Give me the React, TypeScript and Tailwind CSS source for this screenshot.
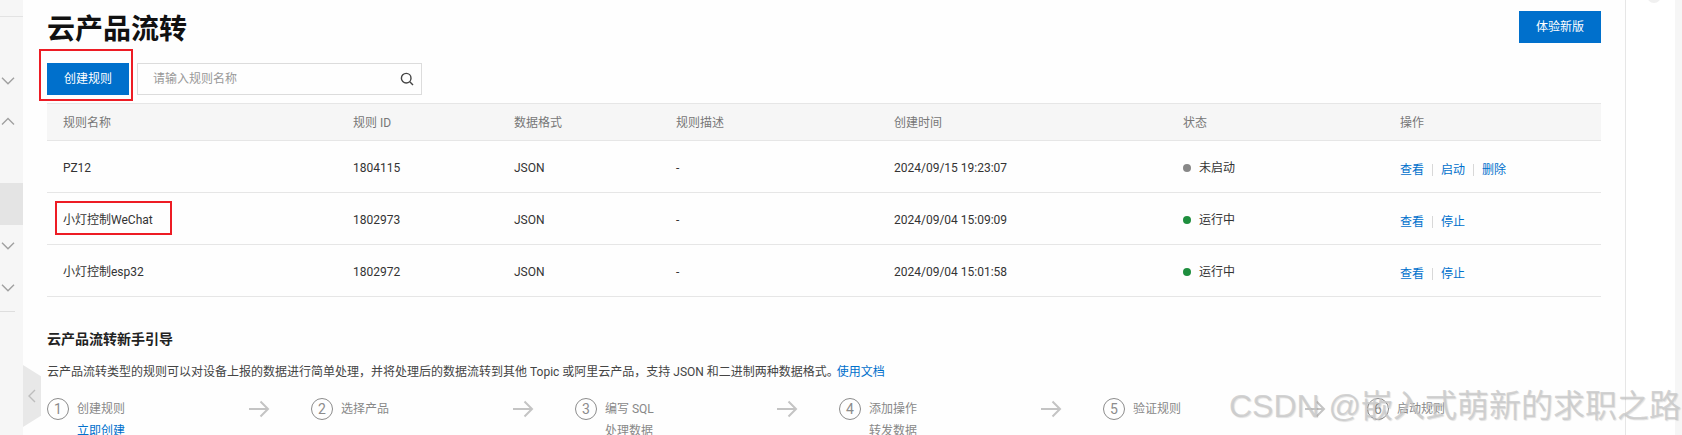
import React from "react";

const font = "font-['Roboto','Noto_Sans_CJK_SC',sans-serif]";

function Chevron({ up }: { up?: boolean }) {
  return (
    <svg width="14" height="8" viewBox="0 0 14 8" fill="none" stroke="#a0a0a0" strokeWidth="1.4">
      <path d={up ? "M1 7.5 L7 1.5 L13 7.5" : "M1 0.8 L7 6.8 L13 0.8"} />
    </svg>
  );
}

function SideRow({ up, h }: { up?: boolean; h: string }) {
  return (
    <div className={`flex items-center pl-px ${h}`}>
      <Chevron up={up} />
    </div>
  );
}

function Sidebar() {
  return (
    <div className="w-[23px] h-full shrink-0 bg-[#f6f6f6] flex flex-col">
      <div className="h-[16px] border-b border-[#e3e3e3] box-content" />
      <div className="h-[44px]" />
      <SideRow h="h-[40px]" />
      <SideRow h="h-[40px]" up />
      <div className="h-[42px]" />
      <div className="h-[42px] bg-[#e4e4e4]" />
      <SideRow h="h-[42px]" />
      <SideRow h="h-[41px]" />
      <div className="mt-[3px] w-[15px] border-b border-[#dedede]" />
    </div>
  );
}

const cols = "grid grid-cols-[290px_161px_162px_218px_289px_217px_1fr]";

function Status({ on, label }: { on?: boolean; label: string }) {
  return (
    <div className="flex items-center text-[#333]">
      <span className={`w-[8px] h-[8px] rounded-full mr-[8px] ${on ? "bg-[#1e8e3e]" : "bg-[#888888]"}`} />
      {label}
    </div>
  );
}

function Actions({ items }: { items: string[] }) {
  return (
    <div className="flex items-center pt-[4px] text-[#0070cc]">
      {items.map((t, i) => (
        <React.Fragment key={t}>
          {i > 0 && <span className="w-px h-[12px] bg-[#d8d8d8] mx-[8px]" />}
          <span>{t}</span>
        </React.Fragment>
      ))}
    </div>
  );
}

function Row({ name, id, time, on, actions }: { name: string; id: string; time: string; on?: boolean; actions: string[] }) {
  return (
    <div className={`${cols} h-[52px] items-center border-b border-[#e6e6e6] text-[#333] [&>div]:px-4 [&>div]:pt-[2px]`}>
      <div>{name}</div>
      <div>{id}</div>
      <div>JSON</div>
      <div>-</div>
      <div>{time}</div>
      <div>
        <Status on={on} label={on ? "运行中" : "未启动"} />
      </div>
      <div>
        <Actions items={actions} />
      </div>
    </div>
  );
}

function Arrow() {
  return (
    <svg width="21" height="18" viewBox="0 0 21 18" fill="none" stroke="#c4c4c4" strokeWidth="2">
      <path d="M0 9 H19 M11.5 1.5 L19 9 L11.5 16.5" />
    </svg>
  );
}

function Step({ n, label, sub, blue, last }: { n: number; label: string; sub?: string; blue?: boolean; last?: boolean }) {
  return (
    <div className="w-[264px] shrink-0 flex items-start">
      <span className="w-[22px] h-[22px] shrink-0 rounded-full border border-[#8c8c8c] text-[#8c8c8c] text-[14px] flex items-center justify-center mr-[8px]">
        {n}
      </span>
      <div className="w-[172px] shrink-0">
        <div className="h-[22px] leading-[22px] text-[#888]">{label}</div>
        {sub && <div className={`h-[22px] leading-[22px] ${blue ? "text-[#0070cc]" : "text-[#888]"}`}>{sub}</div>}
      </div>
      {!last && (
        <div className="h-[22px] flex items-center">
          <Arrow />
        </div>
      )}
    </div>
  );
}

export default function App() {
  return (
    <div className={`relative w-[1682px] h-[435px] overflow-hidden bg-[#fefefe] flex text-[12px] ${font}`}>
      <Sidebar />
      <div className="w-[1554px] ml-[24px] shrink-0">
        <div className="h-[63px] flex justify-between">
          <h1 className="h-[60px] leading-[60px] text-[28px] font-bold text-[#111]">云产品流转</h1>
          <button className="w-[82px] h-[32px] mt-[11px] bg-[#0070cc] text-white">体验新版</button>
        </div>
        <div className="flex h-[32px] mb-[8px]">
          <button className="w-[82px] h-[32px] bg-[#0070cc] text-white">创建规则</button>
          <div className="ml-[8px] w-[285px] h-[32px] border border-[#dcdcdc] flex items-center justify-between pl-[15px] pr-[7px] text-[#999]">
            <span>请输入规则名称</span>
            <svg width="14" height="14" viewBox="0 0 14 14" fill="none" stroke="#444" strokeWidth="1.4">
              <circle cx="6.2" cy="6.2" r="4.8" />
              <path d="M9.8 9.8 L13 13" />
            </svg>
          </div>
        </div>
        <div className={`${cols} h-[38px] items-center bg-[#f6f6f6] border-y border-[#e6e6e6] text-[#777] [&>div]:px-4 [&>div]:pt-[1px]`}>
          <div>规则名称</div>
          <div>规则 ID</div>
          <div>数据格式</div>
          <div>规则描述</div>
          <div>创建时间</div>
          <div>状态</div>
          <div>操作</div>
        </div>
        <Row name="PZ12" id="1804115" time="2024/09/15 19:23:07" actions={["查看", "启动", "删除"]} />
        <Row name="小灯控制WeChat" id="1802973" time="2024/09/04 15:09:09" on actions={["查看", "停止"]} />
        <Row name="小灯控制esp32" id="1802972" time="2024/09/04 15:01:58" on actions={["查看", "停止"]} />
        <div className="mt-[32px] h-[20px] leading-[20px] text-[14px] font-bold text-[#222]">云产品流转新手引导</div>
        <div className="mt-[13px] h-[20px] leading-[20px] text-[#444]">
          云产品流转类型的规则可以对设备上报的数据进行简单处理，并将处理后的数据流转到其他 Topic 或阿里云产品，支持 JSON 和二进制两种数据格式。
          <span className="text-[#0070cc] ml-[-2px]">使用文档</span>
        </div>
        <div className="mt-[16px] flex">
          <Step n={1} label="创建规则" sub="立即创建" blue />
          <Step n={2} label="选择产品" />
          <Step n={3} label="编写 SQL" sub="处理数据" />
          <Step n={4} label="添加操作" sub="转发数据" />
          <Step n={5} label="验证规则" />
          <Step n={6} label="启动规则" last />
        </div>
      </div>
      <div className="ml-[24px] w-[50px] h-full border-l border-[#e6e6e6] bg-white shrink-0" />
      <div className="flex-1 bg-[#f6f6f6]" />

      <div className="absolute left-[1647px] top-[-11px] w-[14px] h-[14px] rounded-full bg-[#f0f0f0]" />
      <div className="absolute left-[23px] top-[365px] w-[18px] h-[62px] bg-[#e8e8e8] [clip-path:polygon(0_0,100%_18%,100%_82%,0_100%)] flex items-center justify-center">
        <svg width="8" height="14" viewBox="0 0 8 14" fill="none" stroke="#bdbdbd" strokeWidth="1.4">
          <path d="M7 1 L1 7 L7 13" />
        </svg>
      </div>
      <div className="absolute left-[39px] top-[49px] w-[94px] h-[52px] border-2 border-[#ed1c24]" />
      <div className="absolute left-[55px] top-[201px] w-[117px] h-[34px] border-2 border-[#ed1c24]" />
      <div className="absolute left-[1229px] top-[384px] text-[32px] leading-[44px] whitespace-nowrap text-[#c8c8c8]/80 [text-shadow:1px_1px_1px_rgba(0,0,0,0.12)] font-['Liberation_Sans','Noto_Sans_CJK_SC',sans-serif]">
        CSDN @嵌入式萌新的求职之路
      </div>
    </div>
  );
}
